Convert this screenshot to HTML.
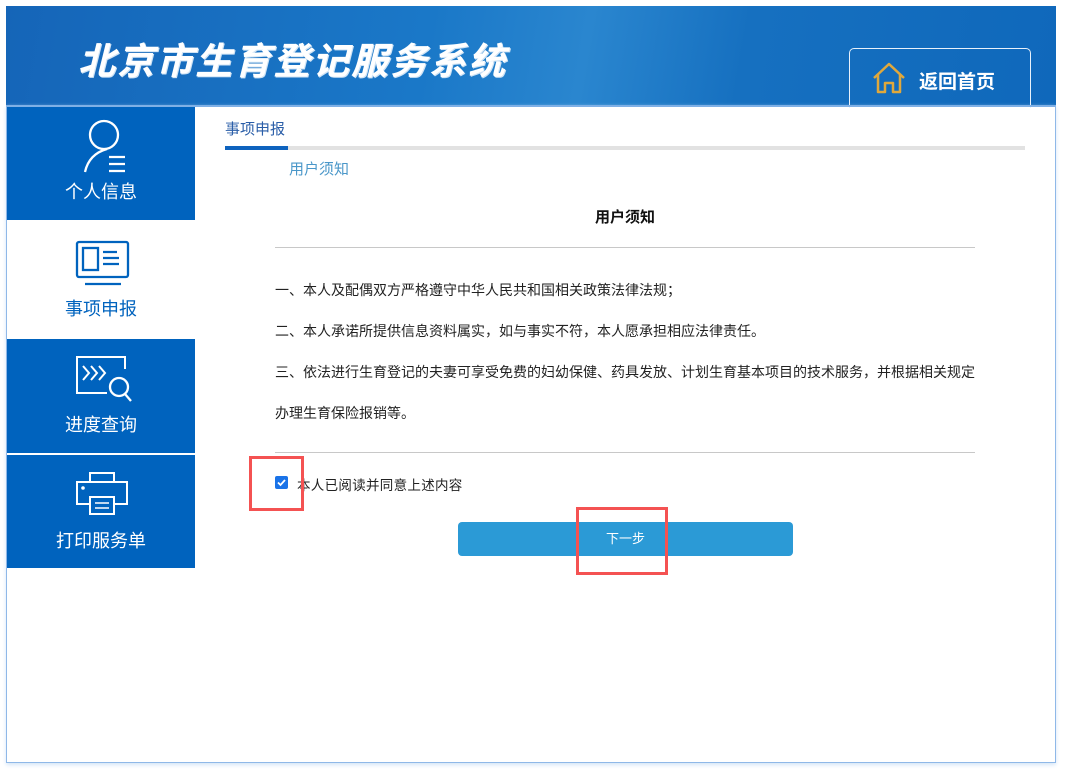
<!DOCTYPE html>
<html><head><meta charset="utf-8"><style>
*{margin:0;padding:0;box-sizing:border-box}
body{width:1066px;height:771px;background:#fff;position:relative;font-family:"Liberation Sans","Noto Sans CJK SC",sans-serif;overflow:hidden}
.abs{position:absolute}
#hdr{left:6px;top:6px;width:1050px;height:100px;background:linear-gradient(100deg,#1565b8 0%,#1a78c8 40%,#2a86cf 55%,#1670c0 70%,#0f68bb 100%)}
#title{left:78px;top:31px;font-size:37px;font-weight:bold;font-style:italic;color:#fff;letter-spacing:2px;text-shadow:1px 1px 0 #cfe3f5}
#home{left:849px;top:48px;width:182px;height:60px;border:1px solid #e8f1fb;border-bottom:none;border-radius:5px 5px 0 0}
#home span{position:absolute;left:69px;top:18px;color:#fff;font-weight:bold;font-size:19px}
#main{left:6px;top:105px;width:1050px;height:658px;border:1px solid #8fb8e8;border-top:2px solid #7fb0e6;box-shadow:0 2px 4px #d5e5f7}
.side{left:7px;width:188px;background:#0063be;color:#fff;font-size:18px;text-align:center}
.side .t{position:absolute;left:0;width:188px}
p.l{position:absolute;left:275px;font-size:14px;color:#222}
.red{position:absolute;border:3px solid #f45252}
</style></head><body>
<div id="hdr" class="abs"></div>
<div id="title" class="abs">北京市生育登记服务系统</div>
<div id="home" class="abs">
<svg style="position:absolute;left:21px;top:12px" width="36" height="34" viewBox="0 0 36 34"><path d="M3 17 L18 3 L33 17 M7 14 V31 H14 V22 H22 V31 H29 V14" fill="none" stroke="#e0a83c" stroke-width="2.5" stroke-linejoin="round"/></svg>
<span>返回首页</span></div>
<div id="main" class="abs"></div>

<div class="abs side" style="top:107px;height:113px">
<svg style="position:absolute;left:72px;top:12px" width="56" height="58" viewBox="0 0 56 58"><circle cx="25" cy="16" r="14" fill="none" stroke="#fff" stroke-width="2.3"/><path d="M6 53 Q10 35 28 30" fill="none" stroke="#fff" stroke-width="2.3"/><path d="M30 38H46M30 45H46M30 52H46" stroke="#fff" stroke-width="2.3"/></svg>
<div class="t" style="top:71px">个人信息</div></div>
<div class="abs side" style="top:220px;height:118px;background:#fff;color:#0063be">
<svg style="position:absolute;left:68px;top:20px" width="56" height="46" viewBox="0 0 56 46"><rect x="2" y="2" width="51" height="35" rx="2" fill="none" stroke="#0063be" stroke-width="2.3"/><rect x="8" y="8" width="15" height="22" fill="none" stroke="#0063be" stroke-width="2.3"/><path d="M28 12H42M28 18H44M28 24H44M10 44H46" stroke="#0063be" stroke-width="2.3"/></svg>
<div class="t" style="top:75px">事项申报</div></div>
<div class="abs side" style="top:339px;height:114px">
<svg style="position:absolute;left:68px;top:16px" width="62" height="50" viewBox="0 0 62 50"><path d="M50 14V2H2V38H32" fill="none" stroke="#fff" stroke-width="2"/><path d="M8 11L14 18L8 25M16 11L22 18L16 25M24 11L30 18L24 25" fill="none" stroke="#fff" stroke-width="2"/><circle cx="44" cy="32" r="9" fill="none" stroke="#fff" stroke-width="2.3"/><path d="M50 39L56 46" stroke="#fff" stroke-width="2.3"/></svg>
<div class="t" style="top:72px">进度查询</div></div>
<div class="abs side" style="top:455px;height:113px">
<svg style="position:absolute;left:68px;top:16px" width="54" height="46" viewBox="0 0 54 46"><rect x="15" y="2" width="24" height="9" fill="none" stroke="#fff" stroke-width="2"/><path d="M14 33H2V11H52V33H40" fill="none" stroke="#fff" stroke-width="2"/><rect x="15" y="26" width="24" height="17" fill="none" stroke="#fff" stroke-width="2"/><circle cx="8" cy="17" r="1.8" fill="#fff"/><path d="M20 32H34M20 37H34" stroke="#fff" stroke-width="1.5"/></svg>
<div class="t" style="top:72px">打印服务单</div></div>

<div class="abs" style="left:225px;top:118px;font-size:15px;color:#2a5ea8">事项申报</div>
<div class="abs" style="left:225px;top:146px;width:800px;height:4px;background:#e2e2e2"></div>
<div class="abs" style="left:225px;top:146px;width:63px;height:4px;background:#0e63be"></div>
<div class="abs" style="left:289px;top:158px;font-size:15px;color:#4a97c9">用户须知</div>
<div class="abs" style="left:275px;top:206px;width:700px;text-align:center;font-size:15px;font-weight:bold;color:#111">用户须知</div>
<div class="abs" style="left:275px;top:247px;width:700px;height:1px;background:#c8c8c8"></div>
<p class="l" style="top:280px">一、本人及配偶双方严格遵守中华人民共和国相关政策法律法规；</p>
<p class="l" style="top:321px">二、本人承诺所提供信息资料属实，如与事实不符，本人愿承担相应法律责任。</p>
<p class="l" style="top:362px">三、依法进行生育登记的夫妻可享受免费的妇幼保健、药具发放、计划生育基本项目的技术服务，并根据相关规定</p>
<p class="l" style="top:403px">办理生育保险报销等。</p>
<div class="abs" style="left:275px;top:452px;width:700px;height:1px;background:#c8c8c8"></div>
<div class="abs" style="left:275px;top:476px;width:13px;height:13px;background:#1a73e8;border-radius:2px"><svg width="13" height="13" viewBox="0 0 13 13" style="position:absolute;left:0;top:0"><path d="M3 6.5L5.5 9L10 4" fill="none" stroke="#fff" stroke-width="1.8"/></svg></div>
<div class="abs" style="left:297px;top:474px;font-size:13.5px;letter-spacing:0.3px;color:#222">本人已阅读并同意上述内容</div>
<div class="abs" style="left:458px;top:522px;width:335px;height:34px;background:#2b9ad6;border-radius:4px;color:#fff;font-size:13px;text-align:center;line-height:34px">下一步</div>
<div class="red" style="left:249px;top:456px;width:55px;height:55px"></div>
<div class="red" style="left:576px;top:507px;width:92px;height:68px"></div>
</body></html>
